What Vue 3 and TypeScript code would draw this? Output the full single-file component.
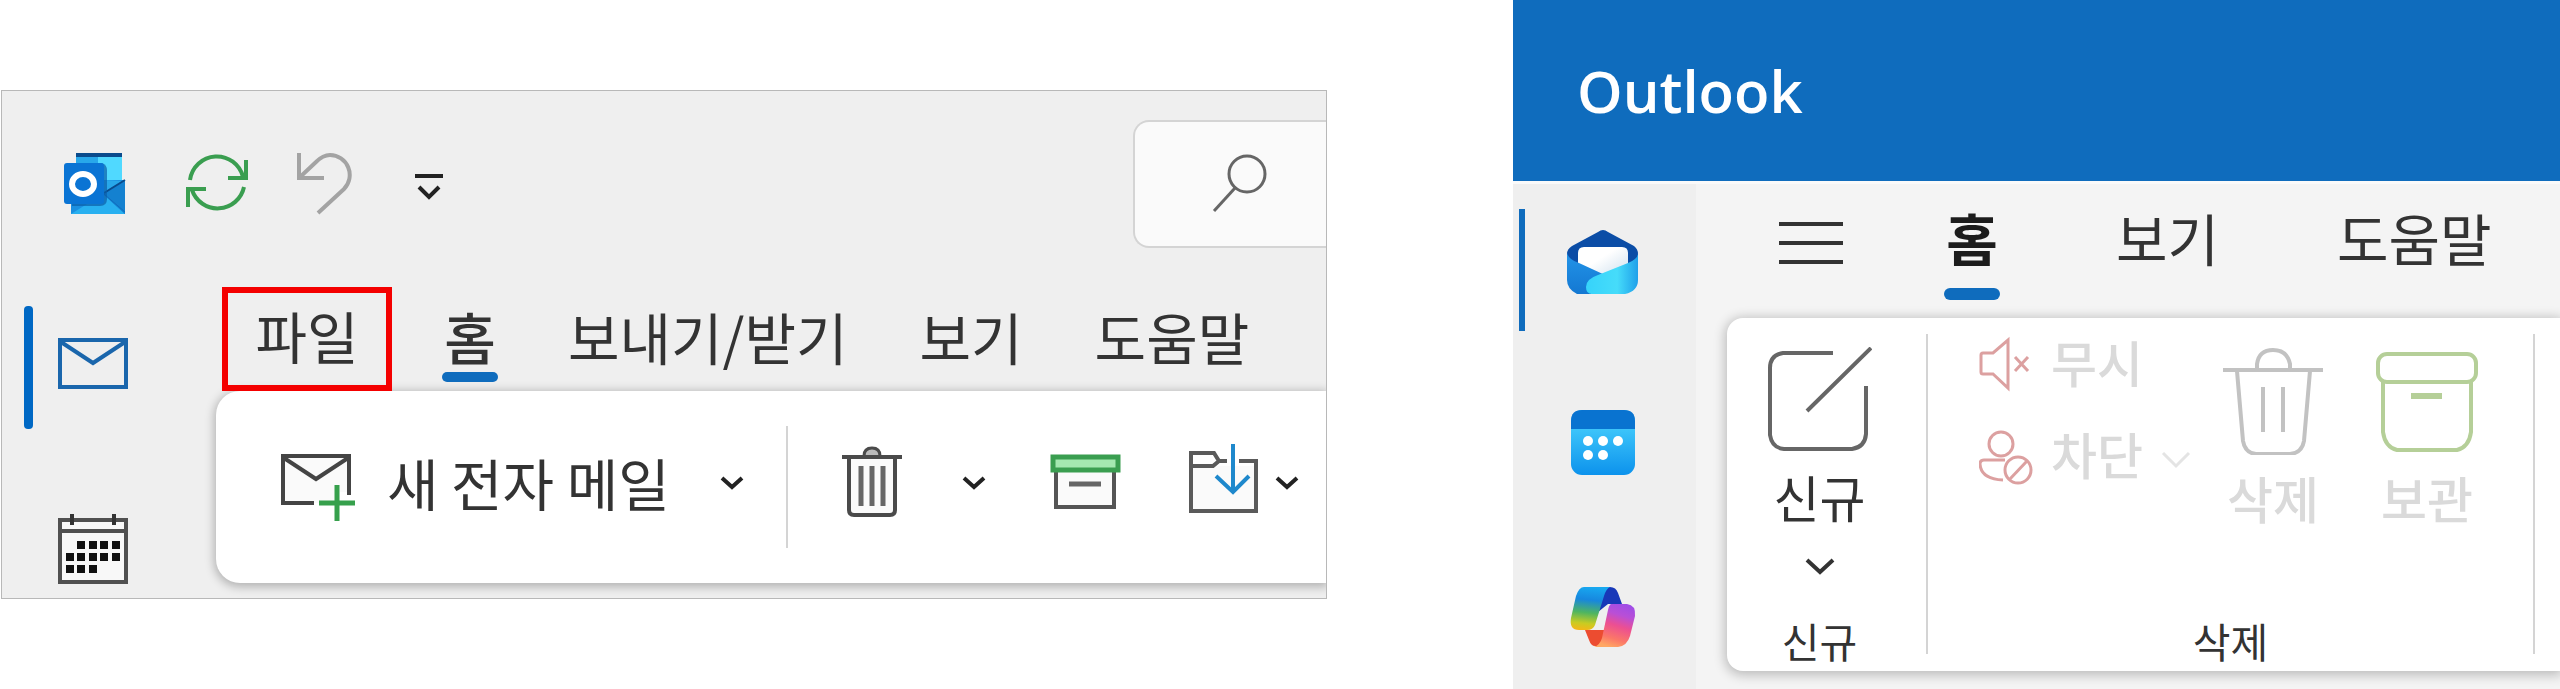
<script setup lang="ts">
interface Tab {
  label: string
  active?: boolean
}

const classicTabs: Tab[] = [
  { label: '홈', active: true },
  { label: '보내기/받기' },
  { label: '보기' },
  { label: '도움말' },
]

const newTabs: Tab[] = [
  { label: '홈', active: true },
  { label: '보기' },
  { label: '도움말' },
]

const classicDots: [number, number][] = [
  [81, 546], [93, 546], [104, 546], [116, 546],
  [70, 558], [81, 558], [93, 558], [104, 558], [116, 558],
  [70, 570], [81, 570], [93, 570],
]

const newDots: [number, number][] = [
  [1588, 441], [1603, 441], [1618, 441],
  [1588, 455], [1603, 455],
]
</script>

<template>
  <main class="page">
    <section class="classic" aria-label="Outlook 클래식">
      <header class="classic-top">
        <svg class="logo" width="62" height="62" viewBox="64 153 62 62" aria-hidden="true">
          <rect x="76" y="153" width="46" height="50" fill="#1490df" />
          <rect x="98" y="155" width="24" height="25" fill="#50d9ff" />
          <rect x="76" y="155" width="22" height="25" fill="#28a8ea" />
          <rect x="98" y="180" width="24" height="20" fill="#1490df" />
          <rect x="76" y="153" width="46" height="4" fill="#0a4b8c" />
          <path d="M71 180h54v34H71z" fill="#1a8fe0" />
          <path d="M71 214l32-20 22 20z" fill="#28b0f0" />
          <path d="M125 181v33l-22-20z" fill="#1481d0" />
          <path d="M122 181l-19 12V180z" fill="#28a8ea" />
          <path d="M104 193l21-13" stroke="#0a4b8c" stroke-width="2" />
          <path d="M104 194l21 18" stroke="#0f6cbd" stroke-width="1" />
          <path d="M76 163h26q5 2 5 7v29q0 7-7 7H72V163z" fill="#0c5ea8" opacity=".7" />
          <rect x="64" y="163" width="40" height="41" rx="3" fill="#0a74d4" />
          <ellipse cx="83" cy="184" rx="11" ry="10" fill="none" stroke="#fff" stroke-width="6" />
        </svg>
        <button class="plain" type="button" aria-label="모든 폴더 보내기/받기">
          <svg width="62" height="62" viewBox="186 153 62 62" fill="none" stroke="#3a9e50" stroke-width="4">
            <path d="M190 180A27 27 0 0 1 243 177M246 160v18h-18M244 187A27 27 0 0 1 192 190M188 207v-18h18" />
          </svg>
        </button>
        <button class="plain" type="button" aria-label="실행 취소">
          <svg width="56" height="62" viewBox="296 153 56 62" fill="none" stroke="#a3a3a3" stroke-width="4">
            <path d="M299 153v25h25M299 178l17-16Q323 155 330 155A20 20 0 0 1 344 189L318 213" />
          </svg>
        </button>
        <button class="plain customize" type="button" aria-label="빠른 실행 도구 모음 사용자 지정">
          <svg width="30" height="62" viewBox="415 153 30 62" fill="none" stroke="#222" stroke-width="4">
            <path d="M416 176h28M420 187l10 10 10-10" />
          </svg>
        </button>
        <label class="search">
          <svg width="56" height="60" viewBox="1212 154 56 60" fill="none" stroke="#666" stroke-width="3">
            <circle cx="1247" cy="174" r="18" />
            <path d="M1235 188l-21 23" />
          </svg>
          <input type="search" aria-label="검색" />
        </label>
      </header>

      <div class="classic-body">
        <nav class="classic-rail" aria-label="앱">
          <button class="rail-item current" type="button" aria-label="메일">
            <svg width="72" height="60" viewBox="57 338 72 60" fill="none" stroke="#1a66ac" stroke-width="4">
              <path d="M60 340h66v47H60zM61 342l32 21 32-21" />
            </svg>
          </button>
          <button class="rail-item" type="button" aria-label="일정">
            <svg width="72" height="72" viewBox="57 514 72 72" fill="none" stroke="#505050" stroke-width="4">
              <rect x="60" y="521" width="66" height="62" fill="#f8f8f8" />
              <path d="M60 532h66" />
              <path d="M72 515v11M114 515v11" stroke="#333" />
              <rect v-for="(d, i) in classicDots" :key="i" :x="d[0] - 4" :y="d[1] - 4" width="8" height="8" fill="#111" stroke="none" />
            </svg>
          </button>
        </nav>

        <div class="classic-main">
          <div class="classic-tabs">
            <button class="file-tab" type="button">파일</button>
            <button v-for="t in classicTabs" :key="t.label" type="button" class="classic-tab" :class="{ active: t.active }">
              <span class="tab-text">{{ t.label }}</span>
              <span class="tab-bar"></span>
            </button>
          </div>
          <div class="classic-ribbon">
            <button class="plain new-mail" type="button">
              <svg width="74" height="88" viewBox="281 443 74 88" fill="none" stroke="#444" stroke-width="4">
                <path d="M283 456h67v36H340V503H283z" fill="#fafafa" stroke="none" />
                <path d="M349 495V456H283v47h31M284 458l32 21 32-21" />
                <path d="M319 503h36M337 485v36" stroke="#36a04c" stroke-width="5" />
              </svg>
              <span>새 전자 메일</span>
            </button>
            <button class="plain chev after-text" type="button" aria-label="새 항목">
              <svg width="24" height="16" viewBox="0 0 24 16" fill="none" stroke="#222" stroke-width="4"><path d="M2 3l10 9L22 3" /></svg>
            </button>
            <span class="rule"></span>
            <button class="plain" type="button" aria-label="삭제">
              <svg width="60" height="88" viewBox="842 443 60 88" fill="none" stroke="#4a4a4a" stroke-width="4">
                <path d="M864 456q0-8 8-8t8 8" fill="#bbb" stroke-width="3" />
                <path d="M849 458v52q0 5 5 5h36q5 0 5-5v-52" fill="#fafafa" />
                <path d="M842 457h60" />
                <path d="M861 466v40M872 466v40M883 466v40" stroke-width="5" stroke="#666" />
              </svg>
            </button>
            <button class="plain chev after-trash" type="button" aria-label="삭제 옵션">
              <svg width="24" height="16" viewBox="0 0 24 16" fill="none" stroke="#222" stroke-width="4"><path d="M2 3l10 9L22 3" /></svg>
            </button>
            <button class="plain archive" type="button" aria-label="보관">
              <svg width="72" height="88" viewBox="1050 443 72 88" fill="none" stroke="#555" stroke-width="4">
                <path d="M1056 470h58v37h-58z" fill="#fafafa" />
                <rect x="1053" y="457" width="65" height="13" fill="#a4e8b0" stroke="#3a9e50" stroke-width="5" />
                <path d="M1069 484h32" stroke="#666" stroke-width="5" />
              </svg>
            </button>
            <button class="plain move" type="button" aria-label="이동">
              <svg width="72" height="88" viewBox="1188 443 72 88" fill="none" stroke="#5a5a5a" stroke-width="4">
                <path d="M1191 466h65v45h-65z" fill="#fafafa" stroke="none" />
                <path d="M1227 461h-8l-5-8h-23v58h65v-50h-17M1191 466h22l6-5" />
                <path d="M1233 444v47M1216 476l17 16 16-16" stroke="#1e88cc" />
              </svg>
            </button>
            <button class="plain chev after-move" type="button" aria-label="이동 옵션">
              <svg width="24" height="16" viewBox="0 0 24 16" fill="none" stroke="#222" stroke-width="4"><path d="M2 3l10 9L22 3" /></svg>
            </button>
          </div>
        </div>
      </div>
    </section>

    <section class="modern" aria-label="새 Outlook">
      <header class="modern-top"><h1>Outlook</h1></header>
      <div class="modern-body">
        <nav class="modern-rail" aria-label="앱">
          <button class="modern-item current" type="button" aria-label="메일">
            <svg width="72" height="72" viewBox="1567 225 72 72">
              <defs>
                <linearGradient id="flap" x1="0" y1="0" x2="1" y2="0"><stop offset="0" stop-color="#36d3fa" /><stop offset=".6" stop-color="#46dcfa" /><stop offset="1" stop-color="#1fa0ea" /></linearGradient>
                <linearGradient id="side" x1="0" y1="0" x2="0" y2="1"><stop offset="0" stop-color="#2294e8" /><stop offset="1" stop-color="#1478d2" /></linearGradient>
                <linearGradient id="sheet" x1="0" y1="0" x2="1" y2="1"><stop offset=".4" stop-color="#fff" /><stop offset="1" stop-color="#c9dcec" /></linearGradient>
              </defs>
              <path d="M1567 254q0-5 5-8l26-14q5-4 10 0l26 14q4 3 4 8v24h-71z" fill="#0b4da6" />
              <path d="M1578 253q0-6 6-6h38q6 0 6 6v12l-25 14-25-14z" fill="url(#sheet)" />
              <path d="M1567 253q2 7 12 10l26 12-14 19h-14q-10-5-10-14z" fill="url(#side)" />
              <path d="M1638 253q0 6-10 10l-30 12q-12 4-12 12 0 7 6 7h33q13-3 13-14z" fill="url(#flap)" />
            </svg>
          </button>
          <button class="modern-item" type="button" aria-label="일정">
            <svg width="72" height="72" viewBox="1567 404 72 72">
              <defs><linearGradient id="cal" x1="0" y1="0" x2="0" y2="1"><stop offset=".3" stop-color="#3cc4fa" /><stop offset="1" stop-color="#0c92ec" /></linearGradient></defs>
              <rect x="1571" y="410" width="64" height="65" rx="11" fill="url(#cal)" />
              <path d="M1571 429v-8q0-11 11-11h42q11 0 11 11v8z" fill="#0973d0" />
              <circle v-for="(d, i) in newDots" :key="i" :cx="d[0]" :cy="d[1]" r="5" fill="#fff" />
            </svg>
          </button>
          <button class="modern-item" type="button" aria-label="Copilot">
            <svg width="72" height="72" viewBox="1567 583 72 72">
              <defs>
                <linearGradient id="cool" x1=".5" y1="0" x2=".4" y2="1"><stop offset="0" stop-color="#18a8f0" /><stop offset=".3" stop-color="#1787de" /><stop offset=".6" stop-color="#4fb560" /><stop offset=".85" stop-color="#c8cc22" /><stop offset="1" stop-color="#f2b818" /></linearGradient>
                <linearGradient id="warm" x1=".7" y1="0" x2=".4" y2="1"><stop offset="0" stop-color="#a04de6" /><stop offset=".25" stop-color="#b94fd6" /><stop offset=".5" stop-color="#ec4f92" /><stop offset=".8" stop-color="#fb7768" /><stop offset="1" stop-color="#ffa763" /></linearGradient>
              </defs>
              <path d="M1604 587h6q6 0 8 6l4 11h-14l-10 8z" fill="#1838b8" />
              <path d="M1585 630h20l-2 16h-8q-4 0-6-6z" fill="#ec4c30" />
              <path d="M1584 587h26q-4 2-6 9l-9 29q-2 5-8 5h-8q-10 0-8-12l5-22q3-9 8-9z" fill="url(#cool)" />
              <path d="M1611 604h16q9 1 8 12l-5 20q-3 10-12 11h-24q6-2 8-9l6-28q1-5 3-6z" fill="url(#warm)" />
            </svg>
          </button>
        </nav>

        <div class="modern-main">
          <div class="modern-tabs">
            <button class="plain menu" type="button" aria-label="탐색 창">
              <svg width="64" height="44" viewBox="0 0 64 44" stroke="#333" stroke-width="4"><path d="M0 3h64M0 22h64M0 41h64" /></svg>
            </button>
            <button v-for="t in newTabs" :key="t.label" type="button" class="modern-tab" :class="{ active: t.active }">
              <span class="tab-text">{{ t.label }}</span>
              <span class="tab-bar"></span>
            </button>
          </div>
          <div class="modern-ribbon">
            <div class="group group-new">
              <button class="plain big" type="button">
                <svg width="104" height="104" viewBox="1769 347 104 104" fill="none" stroke="#666" stroke-width="4">
                  <path d="M1834 353h-50q-13 2-13 15v67q2 13 14 14h68q13-2 14-15v-48M1808 411l64-63" />
                </svg>
                <span>신규</span>
                <svg class="below" width="30" height="18" viewBox="0 0 30 18" fill="none" stroke="#333" stroke-width="4"><path d="M2 2l13 12L28 2" /></svg>
              </button>
              <p class="group-name">신규</p>
            </div>
            <span class="rule"></span>
            <div class="group group-delete">
              <div class="group-row">
                <div class="small-list">
                  <button class="plain small" type="button" disabled>
                    <svg width="54" height="64" viewBox="1980 329 54 64" fill="none" stroke="#dca0a0" stroke-width="3">
                      <path d="M1982 355q0-2 2-2h10l15-13v48l-15-14h-10q-2 0-2-2zM2016 357l13 14M2029 357l-13 14" />
                    </svg>
                    <span>무시</span>
                  </button>
                  <button class="plain small" type="button" disabled>
                    <svg width="54" height="64" viewBox="1980 421 54 64" fill="none" stroke="#dca0a0" stroke-width="3">
                      <circle cx="2002" cy="444" r="12" />
                      <path d="M2006 460h-21q-4 0-4 4 1 15 23 16" />
                      <circle cx="2019" cy="470" r="13" /><path d="M2010 480l18-19" />
                    </svg>
                    <span>차단</span>
                    <svg class="side-chev" width="30" height="18" viewBox="0 0 30 18" fill="none" stroke="#e4e4e4" stroke-width="3"><path d="M2 2l13 13L28 2" /></svg>
                  </button>
                </div>
                <button class="plain big" type="button" disabled>
                  <svg width="102" height="108" viewBox="2222 346 102 108" fill="none" stroke="#c2c2c2" stroke-width="4">
                    <path d="M2223 369h100M2257 368v-5q2-14 16-14t17 14v5M2237 370l6 70q2 12 13 13h34q12-1 14-13l6-70M2263 386v45M2283 386v45" />
                  </svg>
                  <span>삭제</span>
                </button>
                <button class="plain big" type="button" disabled>
                  <svg width="102" height="108" viewBox="2376 346 102 108" fill="none" stroke="#b5cf98" stroke-width="4">
                    <rect x="2378" y="353" width="98" height="28" rx="9" />
                    <path d="M2383 381v50q2 15 14 18h60q12-3 14-18v-50" />
                    <path d="M2411 395h31" stroke-width="6" />
                  </svg>
                  <span>보관</span>
                </button>
              </div>
              <p class="group-name">삭제</p>
            </div>
            <span class="rule"></span>
          </div>
        </div>
      </div>
    </section>
  </main>
</template>

<style>
body {
  margin: 0;
  background: #fff;
}
</style>

<style scoped>
.page {
  display: grid;
  grid-template-columns: 1327fr 1047fr;
  column-gap: 186px;
  align-items: start;
  overflow: hidden;
  color: #333;
  font-family: "Noto Sans CJK KR", sans-serif;
  font-size: 56px;
}
svg {
  display: block;
  flex: none;
}
button {
  flex: none;
  margin: 0;
  padding: 0;
  border: 0;
  background: none;
  color: inherit;
  font: inherit;
  white-space: nowrap;
}
.plain {
  display: flex;
  align-items: center;
}
.tab-text {
  display: block;
}
.tab-bar {
  display: block;
  align-self: center;
  width: 56px;
}
.active .tab-bar {
  background: #0f6cbd;
}

.classic {
  min-width: 0;
  margin: 90px 0 0 1px;
  overflow: hidden;
  border: 1px solid #b8b8b8;
  background: #efefef;
}
.classic-top {
  display: flex;
  align-items: center;
  gap: 48px;
  padding: 29px 0 0 62px;
}
.logo {
  margin-right: 12px;
}
.customize {
  margin-left: 14px;
}
.search {
  display: flex;
  align-items: center;
  box-sizing: border-box;
  width: 193px;
  height: 128px;
  margin-left: auto;
  padding-left: 77px;
  border: 2px solid #d4d4d4;
  border-right: 0;
  border-radius: 16px 0 0 16px;
  background: #fafafa;
}
.search input {
  flex: 1;
  min-width: 0;
  border: 0;
  outline: 0;
  background: none;
  font: inherit;
  font-size: 40px;
}
.classic-body {
  display: flex;
}
.classic-rail {
  display: flex;
  flex: 0 0 214px;
  flex-direction: column;
  gap: 84px;
  padding-top: 58px;
}
.rail-item {
  display: flex;
  align-items: center;
  padding-left: 55px;
}
.rail-item.current {
  padding-left: 22px;
}
.rail-item.current::before {
  width: 9px;
  height: 123px;
  margin-right: 24px;
  border-radius: 4px;
  background: #0068c4;
  content: "";
}
.classic-main {
  flex: 1;
  min-width: 0;
  padding: 39px 0 15px;
}
.classic-tabs {
  display: flex;
  padding-left: 6px;
}
.file-tab {
  box-sizing: border-box;
  width: 170px;
  height: 104px;
  margin-right: 16px;
  padding-bottom: 8px;
  border: 6px solid #f40000;
  line-height: 72px;
}
.classic-tab {
  display: flex;
  flex-direction: column;
  padding: 12px 36px 0;
}
.classic-tab .tab-text {
  line-height: 73px;
}
.classic-tab .tab-bar {
  height: 10px;
  margin: 0 -2px;
  border-radius: 5px;
}
.classic-tab.active {
  font-weight: 500;
}
.classic-ribbon {
  display: flex;
  align-items: center;
  height: 192px;
  padding-left: 65px;
  border-radius: 24px 0 0 24px;
  background: #fff;
  box-shadow: 0 2px 10px 2px rgba(0, 0, 0, 0.25);
}
.new-mail {
  gap: 32px;
}
.new-mail span {
  padding-bottom: 12px;
}
.chev {
  height: 24px;
  padding-bottom: 8px;
}
.after-text {
  margin-left: 50px;
}
.rule {
  flex: none;
  width: 2px;
  background: #d4d4d4;
}
.classic-ribbon .rule {
  height: 122px;
  margin: 0 54px 0 42px;
}
.after-trash {
  margin-left: 60px;
}
.archive {
  margin-left: 64px;
}
.move {
  margin-left: 66px;
}
.after-move {
  margin-left: 15px;
}

.modern {
  min-width: 0;
  background: #f4f4f4;
}
.modern-top {
  display: flex;
  align-items: center;
  height: 181px;
  padding-left: 64px;
  background: #0f6cbd;
}
.modern-top h1 {
  margin: 0;
  color: #fff;
  font: 600 58px/80px "Open Sans", sans-serif;
}
.modern-body {
  display: flex;
  border-top: 3px solid #fafafa;
}
.modern-rail {
  display: flex;
  flex: 0 0 183px;
  flex-direction: column;
  gap: 57px;
  box-sizing: border-box;
  padding: 25px 0 0 6px;
  background: #efefef;
}
.modern-item {
  align-self: flex-start;
  padding: 16px 0 34px 42px;
  border-left: 6px solid transparent;
}
.modern-item.current {
  border-color: #0f6cbd;
}
.modern-main {
  flex: 1;
  min-width: 0;
  overflow: hidden;
  padding-bottom: 18px;
}
.modern-tabs {
  display: flex;
  height: 134px;
  box-sizing: border-box;
  padding: 15px 0 0 83px;
  gap: 118px;
}
.menu {
  height: 88px;
  margin-right: -15px;
}
.modern-tab {
  display: flex;
  flex-direction: column;
}
.modern-tab .tab-text {
  line-height: 76px;
}
.modern-tab .tab-bar {
  height: 12px;
  margin: 13px -2px 0;
  border-radius: 6px;
}
.modern-tab.active {
  color: #1c1c1c;
  font-weight: 700;
}
.modern-ribbon {
  display: flex;
  height: 353px;
  margin-left: 31px;
  border-radius: 16px 0 0 16px;
  background: #fff;
  box-shadow: 0 2px 12px 2px rgba(0, 0, 0, 0.24);
}
.modern-ribbon .rule {
  height: 320px;
  margin-top: 16px;
}
.group {
  display: flex;
  flex: none;
  flex-direction: column;
  align-items: center;
  justify-content: space-between;
  box-sizing: border-box;
  padding-bottom: 3px;
}
.group-new {
  width: 199px;
  padding-top: 29px;
  padding-right: 14px;
}
.group-delete {
  width: 605px;
  padding-top: 11px;
}
.group-name {
  margin: 0;
  font-size: 41px;
  line-height: 56px;
}
.big {
  flex-direction: column;
  font-size: 50px;
  line-height: 64px;
}
.big span {
  margin-top: 13px;
}
.below {
  margin-top: 30px;
}
.group-row {
  display: flex;
  align-items: flex-start;
  align-self: stretch;
  gap: 52px;
  padding-left: 51px;
}
.group-row .big {
  padding-top: 18px;
}
.group-row .big span {
  margin-top: 10px;
}
.small-list {
  display: flex;
  flex-direction: column;
  gap: 28px;
  width: 191px;
}
.small {
  gap: 18px;
  font-size: 50px;
  line-height: 64px;
}
.small:disabled,
.big:disabled {
  color: #dadada;
  font-weight: 500;
}
.side-chev {
  margin-top: 14px;
}
</style>
